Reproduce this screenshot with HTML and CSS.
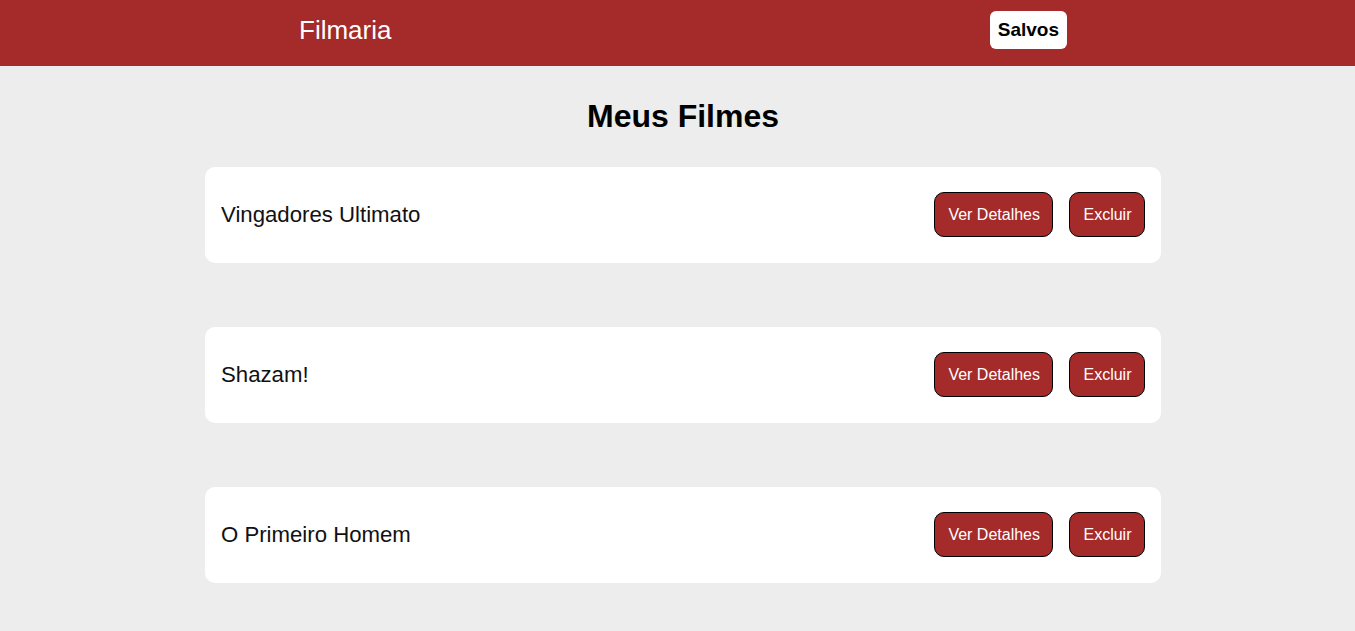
FILE: index.html
```html
<!DOCTYPE html>
<html lang="pt-BR">
<head>
<meta charset="utf-8">
<title>Filmaria</title>
<link rel="stylesheet" href="styles.css">
</head>
<body>
<header class="header">
  <a class="logo" href="#">Filmaria</a>
  <a class="saved" href="#">Salvos</a>
</header>
<main class="main">
  <h1 class="title">Meus Filmes</h1>
  <ul class="list">
    <li class="card">
      <span class="card-name">Vingadores Ultimato</span>
      <div class="actions">
        <button class="btn">Ver Detalhes</button>
        <button class="btn">Excluir</button>
      </div>
    </li>
    <li class="card">
      <span class="card-name">Shazam!</span>
      <div class="actions">
        <button class="btn">Ver Detalhes</button>
        <button class="btn">Excluir</button>
      </div>
    </li>
    <li class="card">
      <span class="card-name">O Primeiro Homem</span>
      <div class="actions">
        <button class="btn">Ver Detalhes</button>
        <button class="btn">Excluir</button>
      </div>
    </li>
  </ul>
</main>
</body>
</html>
```

FILE: styles.css
```css
* { box-sizing: border-box; }
html, body {
  margin: 0;
  padding: 0;
  background: #ededed;
  font-family: "Liberation Sans", Arial, sans-serif;
}
.header {
  height: 66px;
  background: #a52a2a;
  display: flex;
  align-items: center;
  justify-content: space-between;
  padding: 11px 288px 17px 299px;
}
.logo {
  color: #fff;
  text-decoration: none;
  font-size: 26px;
}
.saved {
  height: 38px;
  display: flex;
  align-items: center;
  padding: 0 8px;
  background: #fff;
  color: #000;
  border-radius: 6px;
  font-weight: bold;
  font-size: 19px;
  text-decoration: none;
}
.main {
  padding-left: 11px;
  display: flex;
  flex-direction: column;
  align-items: center;
}
.title {
  font-size: 32px;
  margin: 32px 0 32px;
  color: #000;
}
.list {
  list-style: none;
  margin: 0;
  padding: 0;
  width: 956px;
  display: flex;
  flex-direction: column;
  gap: 64px;
}
.card {
  background: #fff;
  border-radius: 10px;
  padding: 25px 16px 26px;
  display: flex;
  align-items: center;
  justify-content: space-between;
}
.card-name {
  font-size: 22.2px;
  color: #111;
}
.actions {
  display: flex;
  gap: 16px;
}
.btn {
  height: 45px;
  padding: 0 12.5px 0 13px;
  background: #a52a2a;
  color: #fff;
  border: 1px solid #000;
  border-radius: 10px;
  font-family: "Liberation Sans", Arial, sans-serif;
  font-size: 16px;
  cursor: pointer;
}
```
